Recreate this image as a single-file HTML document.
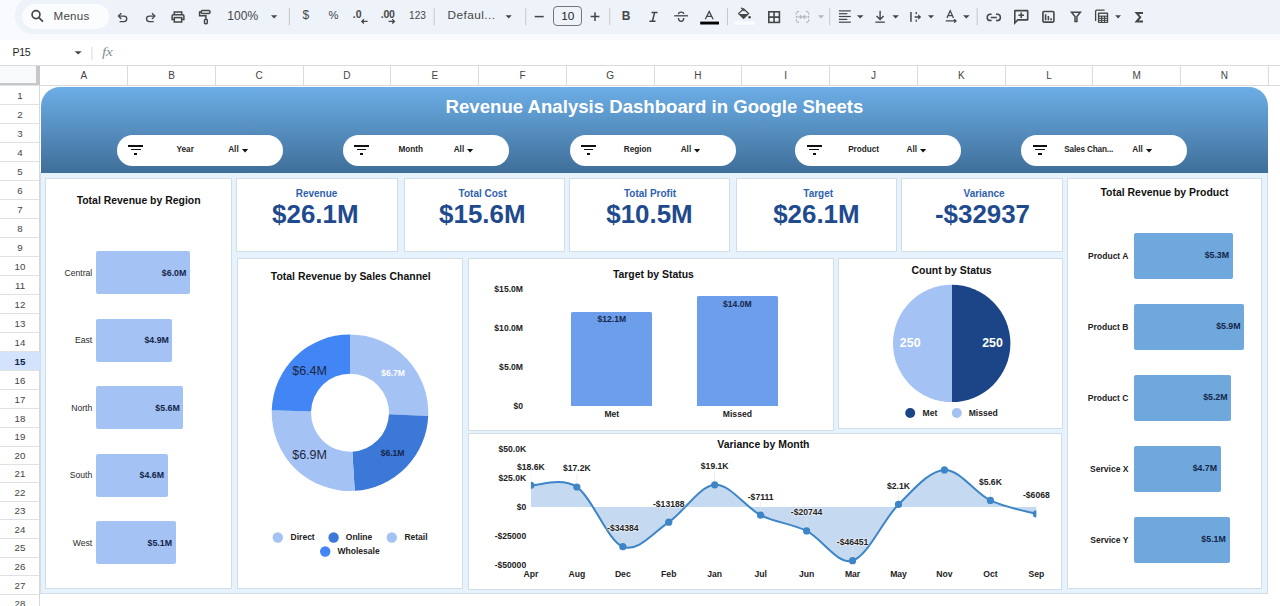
<!DOCTYPE html>
<html><head><meta charset="utf-8"><style>
*{box-sizing:border-box;margin:0;padding:0}
html,body{width:1280px;height:606px;overflow:hidden;background:#f9fbfd;font-family:"Liberation Sans",sans-serif;position:relative}
.a{position:absolute}
.t{position:absolute;white-space:nowrap;line-height:1}
.c{transform:translateX(-50%)}
.r{transform:translateX(-100%)}
svg{position:absolute;overflow:visible}
.card{position:absolute;background:#fff;border:1.6px solid #d2e2f2}
.ttl{position:absolute;white-space:nowrap;line-height:1;font-weight:700;font-size:10.35px;color:#111;transform:translateX(-50%)}
.pill{position:absolute;top:135px;width:166px;height:31px;border-radius:16px;background:#fff}
.pl{position:absolute;font-size:8.3px;font-weight:700;color:#1f1f1f;white-space:nowrap;line-height:1}
.kl{position:absolute;font-size:10.2px;font-weight:700;color:#3b6ec6;white-space:nowrap;line-height:1;transform:translateX(-50%)}
.kv{position:absolute;font-size:25.6px;font-weight:700;color:#1f4a8a;white-space:nowrap;line-height:1;transform:translateX(-50%)}
.rh{position:absolute;left:0;width:39.5px;text-align:center;font-size:9.8px;color:#444;line-height:1}
.ch{position:absolute;top:71.5px;font-size:9.8px;color:#444;line-height:1;transform:translateX(-50%)}
</style></head><body>
<div class="a" style="left:0px;top:0px;width:1280px;height:40px;background:#f8fafd"></div>
<div class="a" style="left:15px;top:-3px;width:1265px;height:36.5px;background:#eef2f9;border-radius:18px 0 0 18px"></div>
<div class="a" style="left:21.5px;top:4px;width:87px;height:24.5px;background:#fbfcfe;border-radius:12.5px"></div>
<div class="t" style="left:53.5px;top:10.08px;font-size:11.6px;font-weight:400;color:#444746;letter-spacing:0.25px;">Menus</div>
<div class="t" style="left:227.3px;top:10.44px;font-size:12px;font-weight:400;color:#444746;letter-spacing:0.1px;">100%</div>
<div class="t" style="left:447.5px;top:9.81px;font-size:11.8px;font-weight:400;color:#444746;letter-spacing:0.45px;">Defaul...</div>
<div class="t" style="left:567.7px;top:11.01px;font-size:11.8px;font-weight:400;color:#1f1f1f;transform:translateX(-50%);">10</div>
<div class="t" style="left:409px;top:10.75px;font-size:10.1px;font-weight:400;color:#444746;letter-spacing:0.05px;">123</div>
<div class="t" style="left:302.4px;top:8.84px;font-size:12px;font-weight:400;color:#444746;">$</div>
<div class="t" style="left:328.5px;top:9.82px;font-size:11.2px;font-weight:400;color:#444746;">%</div>
<div class="t" style="left:352.8px;top:8.81px;font-size:10.5px;font-weight:700;color:#444746;">.0</div>
<div class="t" style="left:380.8px;top:8.81px;font-size:10.5px;font-weight:700;color:#444746;letter-spacing:-0.3px;">.00</div>
<div class="a" style="left:553px;top:6.2px;width:29px;height:20px;border:1px solid #747775;border-radius:4px"></div>
<svg width="1280" height="34" style="left:0;top:0" viewBox="0 0 1280 34"><circle cx="36" cy="14.6" r="3.95" stroke="#444746" fill="none" stroke-linecap="butt" stroke-linejoin="miter" stroke-width="1.7"/><path d="M38.9,17.6 L42.9,21.6" stroke="#444746" fill="none" stroke-linecap="butt" stroke-linejoin="miter" stroke-width="1.7"/><path d="M121.3,13.2 L118.5,16.1 L121.3,19" stroke="#444746" fill="none" stroke-linecap="butt" stroke-linejoin="miter" stroke-width="1.35"/><path d="M118.8,16.1 H124 A2.75,2.75 0 0 1 124,21.6 H119.6" stroke="#444746" fill="none" stroke-linecap="butt" stroke-linejoin="miter" stroke-width="1.35"/><path d="M152,13.2 L154.8,16.1 L152,19" stroke="#444746" fill="none" stroke-linecap="butt" stroke-linejoin="miter" stroke-width="1.35"/><path d="M154.5,16.1 H149.3 A2.75,2.75 0 0 0 149.3,21.6 H153.7" stroke="#444746" fill="none" stroke-linecap="butt" stroke-linejoin="miter" stroke-width="1.35"/><path d="M174.3,14.6 V11.9 H181.7 V14.6" stroke="#444746" fill="none" stroke-linecap="butt" stroke-linejoin="miter" stroke-width="1.5"/><path d="M174.3,19.6 H172.1 V16.1 Q172.1,14.8 173.4,14.8 H182.6 Q183.9,14.8 183.9,16.1 V19.6 H181.7" stroke="#444746" fill="none" stroke-linecap="butt" stroke-linejoin="miter" stroke-width="1.5"/><rect x="174.3" y="17.6" width="7.4" height="4.4" stroke="#444746" fill="none" stroke-linecap="butt" stroke-linejoin="miter" stroke-width="1.5"/><rect x="201.2" y="10.5" width="8.8" height="3" rx="1.2" stroke="#444746" fill="none" stroke-linecap="butt" stroke-linejoin="miter" stroke-width="1.5"/><path d="M201,12 H199.6 V15.8 H205.9 V18.8" stroke="#444746" fill="none" stroke-linecap="butt" stroke-linejoin="miter" stroke-width="1.5"/><rect x="204.5" y="19.2" width="2.8" height="4.6" rx="1" stroke="#444746" fill="none" stroke-linecap="butt" stroke-linejoin="miter" stroke-width="1.5"/><rect x="288.9" y="8.3" width="1" height="17" fill="#c7c7c7"/><rect x="433.7" y="8.3" width="1" height="17" fill="#c7c7c7"/><rect x="525.2" y="8.3" width="1" height="17" fill="#c7c7c7"/><rect x="609.2" y="8.3" width="1" height="17" fill="#c7c7c7"/><rect x="727.0" y="8.3" width="1" height="17" fill="#c7c7c7"/><rect x="829.2" y="8.3" width="1" height="17" fill="#c7c7c7"/><rect x="976.7" y="8.3" width="1" height="17" fill="#c7c7c7"/><path d="M271,15.2 L277.2,15.2 L274.1,18.4 Z" fill="#444746"/><path d="M505.6,15.2 L511.8,15.2 L508.70000000000005,18.4 Z" fill="#444746"/><path d="M856.9,15.2 L863.5,15.2 L860.2,18.4 Z" fill="#444746"/><path d="M892.4,15.2 L898.9,15.2 L895.65,18.4 Z" fill="#444746"/><path d="M928,15.2 L934,15.2 L931.0,18.4 Z" fill="#444746"/><path d="M963,15.2 L969.7,15.2 L966.35,18.4 Z" fill="#444746"/><path d="M1115.2,15.2 L1121,15.2 L1118.1,18.4 Z" fill="#444746"/><path d="M818,15.2 L824,15.2 L821.0,18.4 Z" fill="#b4b6b8"/><path d="M367.6,21.4 H361.8 M363.9,19.3 L361.8,21.4 L363.9,23.5" stroke="#444746" fill="none" stroke-linecap="butt" stroke-linejoin="miter" stroke-width="1.3"/><path d="M388.6,21.4 H394.4 M392.3,19.3 L394.4,21.4 L392.3,23.5" stroke="#444746" fill="none" stroke-linecap="butt" stroke-linejoin="miter" stroke-width="1.3"/><path d="M534.7,16.6 H543.7" stroke="#444746" fill="none" stroke-linecap="butt" stroke-linejoin="miter" stroke-width="1.5"/><path d="M590.6,16.6 H599.4 M595,12.2 V21" stroke="#444746" fill="none" stroke-linecap="butt" stroke-linejoin="miter" stroke-width="1.5"/></svg><div class="t" style="left:621.8px;top:10.24px;font-size:12px;font-weight:700;color:#444746;">B</div>
<svg width="1280" height="34" style="left:0;top:0" viewBox="0 0 1280 34"><path d="M651.5,12.6 H657.6 M649.4,21.2 H655.5 M654.6,12.6 L652.4,21.2" stroke="#444746" fill="none" stroke-linecap="butt" stroke-linejoin="miter" stroke-width="1.5"/><path d="M674.2,15.8 H688" stroke="#444746" fill="none" stroke-linecap="butt" stroke-linejoin="miter" stroke-width="1.3"/><path d="M678.4,14.3 Q678.6,12.1 681.1,12.1 Q683.6,12.1 683.8,14" stroke="#444746" fill="none" stroke-linecap="butt" stroke-linejoin="miter" stroke-width="1.3"/><path d="M678.4,18 Q678.6,21.3 681.1,21.3 Q683.6,21.3 683.8,18" stroke="#444746" fill="none" stroke-linecap="butt" stroke-linejoin="miter" stroke-width="1.3"/><path d="M705.3,19.2 L709.2,11.4 L713.1,19.2 M706.8,16.4 H711.6" stroke="#444746" fill="none" stroke-linecap="butt" stroke-linejoin="miter" stroke-width="1.3"/><rect x="700.2" y="21.6" width="18.8" height="2.9" fill="#000"/><path d="M741.2,7.8 L744.5,11.1" stroke="#444746" fill="none" stroke-linecap="butt" stroke-linejoin="miter" stroke-width="1.3"/><path d="M738.6,13.6 L743.6,8.8 L748.6,13.6 L743.6,18.4 Z" stroke="#444746" fill="none" stroke-linecap="butt" stroke-linejoin="miter" stroke-width="1.3"/><path d="M739,13.9 H748.2 L743.6,18.3 Z" fill="#444746"/><circle cx="749.6" cy="17.3" r="1.3" fill="#444746"/><rect x="734.6" y="21.4" width="20.4" height="3.2" fill="#fbfcfd"/><rect x="768.8" y="11.8" width="10.6" height="10.6" stroke="#444746" fill="none" stroke-linecap="butt" stroke-linejoin="miter" stroke-width="1.6"/><path d="M774.1,11.8 V22.4 M768.8,17.1 H779.4" stroke="#444746" fill="none" stroke-linecap="butt" stroke-linejoin="miter" stroke-width="1.6"/><path d="M799,11.6 H796.4 V22.2 H799 M806,11.6 H808.6 V22.2 H806" stroke="#b4b6b8" stroke-width="1.2" fill="none" stroke-dasharray="2.2 1.2"/><path d="M797.5,16.9 H801.6 M800,15.2 L801.8,16.9 L800,18.6 M807.5,16.9 H803.4 M805,15.2 L803.2,16.9 L805,18.6" stroke="#b4b6b8" stroke-width="1.2" fill="none"/><rect x="838.9" y="10.3" width="11.899999999999977" height="1.2" fill="#444746"/><rect x="838.9" y="13.1" width="8.399999999999977" height="1.2" fill="#444746"/><rect x="838.9" y="15.9" width="11.899999999999977" height="1.2" fill="#444746"/><rect x="838.9" y="18.799999999999997" width="8.399999999999977" height="1.2" fill="#444746"/><rect x="838.9" y="21.599999999999998" width="11.899999999999977" height="1.2" fill="#444746"/><path d="M880.1,10.8 V19.4 M876.6,16 L880.1,19.5 L883.6,16" stroke="#444746" fill="none" stroke-linecap="butt" stroke-linejoin="miter" stroke-width="1.4"/><rect x="875.4" y="21.5" width="9.4" height="1.3" fill="#444746"/><rect x="910.2" y="12" width="1.5" height="9.8" fill="#444746"/><rect x="915.6" y="12" width="1.3" height="2.2" fill="#444746"/><rect x="915.6" y="19.6" width="1.3" height="2.2" fill="#444746"/><path d="M914.6,17 H918.8" stroke="#444746" fill="none" stroke-linecap="butt" stroke-linejoin="miter" stroke-width="1.5"/><path d="M918.2,14.2 L921.2,17 L918.2,19.8 Z" fill="#444746"/><path d="M946.9,18 L950.2,10.8 L953.5,18 M948.1,15.6 H952.3" stroke="#444746" fill="none" stroke-linecap="butt" stroke-linejoin="miter" stroke-width="1.25"/><path d="M945.8,20.9 H956 M954.2,19.2 L956,20.9 L954.2,22.6" stroke="#444746" fill="none" stroke-linecap="butt" stroke-linejoin="miter" stroke-width="1.3"/><path d="M991.6,14.2 H990.4 A3.2,3.2 0 0 0 990.4,20.6 H991.6 M996,14.2 H997.2 A3.2,3.2 0 0 1 997.2,20.6 H996 M990.8,17.4 H996.8" stroke="#444746" fill="none" stroke-linecap="butt" stroke-linejoin="miter" stroke-width="1.5"/><path d="M1014.8,23 V11.1 Q1014.8,10.6 1015.3,10.6 H1027.2 Q1027.7,10.6 1027.7,11.1 V19.4 Q1027.7,19.9 1027.2,19.9 H1017.8 Z" stroke="#444746" fill="none" stroke-linecap="butt" stroke-linejoin="miter" stroke-width="1.6"/><path d="M1021.2,12.4 V18 M1018.4,15.2 H1024" stroke="#444746" fill="none" stroke-linecap="butt" stroke-linejoin="miter" stroke-width="1.6"/><rect x="1042.9" y="11.5" width="11" height="10.6" rx="1" stroke="#444746" fill="none" stroke-linecap="butt" stroke-linejoin="miter" stroke-width="1.6"/><path d="M1045.6,14.2 V20.2 M1048.4,15.9 V20.2 M1051.1,18.2 V20.2" stroke="#444746" fill="none" stroke-linecap="butt" stroke-linejoin="miter" stroke-width="1.6"/><path d="M1071.5,12.2 H1080.4 L1076.9,16.6 V21.6 H1075 V16.6 Z" stroke="#444746" fill="none" stroke-linecap="butt" stroke-linejoin="miter" stroke-width="1.5"/><path d="M1095.6,21 V11.2 Q1095.6,10.1 1096.7,10.1 H1104.6" stroke="#444746" fill="none" stroke-linecap="butt" stroke-linejoin="miter" stroke-width="1.3"/><rect x="1097.9" y="12.4" width="10.3" height="10.6" rx="1" fill="#444746"/><rect x="1099.3" y="16.75" width="1.6" height="1.1" fill="#eef2f9"/><rect x="1099.3" y="18.849999999999998" width="1.6" height="1.1" fill="#eef2f9"/><rect x="1099.3" y="20.849999999999998" width="1.6" height="1.1" fill="#eef2f9"/><rect x="1102.25" y="16.75" width="1.6" height="1.1" fill="#eef2f9"/><rect x="1102.25" y="18.849999999999998" width="1.6" height="1.1" fill="#eef2f9"/><rect x="1102.25" y="20.849999999999998" width="1.6" height="1.1" fill="#eef2f9"/><rect x="1105.2" y="16.75" width="1.6" height="1.1" fill="#eef2f9"/><rect x="1105.2" y="18.849999999999998" width="1.6" height="1.1" fill="#eef2f9"/><rect x="1105.2" y="20.849999999999998" width="1.6" height="1.1" fill="#eef2f9"/><rect x="1099.2" y="13.9" width="7.7" height="1.7" fill="#eef2f9"/><path d="M1143,12.9 H1136.6 L1140.2,17.2 L1136.6,21.5 H1143" stroke="#444746" fill="none" stroke-linecap="butt" stroke-linejoin="miter" stroke-width="2"/></svg><div class="a" style="left:0px;top:40px;width:1280px;height:24.5px;background:#fff"></div>
<div class="t" style="left:12.6px;top:47.03px;font-size:10.6px;font-weight:400;color:#1f1f1f;letter-spacing:-0.35px;">P15</div>
<svg width="130" height="66" style="left:0;top:0"><path d="M74.6,51.2 L81.8,51.2 L78.19999999999999,54.6 Z" fill="#444746"/><rect x="91.4" y="46.7" width="1" height="13.7" fill="#d7d9dc"/></svg><div class="t" style="left:102px;top:46.36px;font-size:12.8px;font-weight:400;color:#8a8f94;font-family:'Liberation Serif';font-style:italic;letter-spacing:-0.2px;transform:scaleX(1.2);transform-origin:0 0;">fx</div>
<div class="a" style="left:0px;top:65px;width:1280px;height:20.5px;background:#fff"></div>
<div class="a" style="left:0px;top:64.6px;width:1280px;height:0.9px;background:#d9dbde"></div>
<div class="a" style="left:0px;top:85.5px;width:40px;height:520.5px;background:#fff"></div>
<div class="a" style="left:0px;top:65.5px;width:37px;height:17.5px;background:#f8f9fa"></div>
<div class="a" style="left:0px;top:82.9px;width:40px;height:2.6px;background:#c5c7ca"></div>
<div class="a" style="left:36.4px;top:65.5px;width:3.4px;height:20px;background:#c5c7ca"></div>
<div class="a" style="left:40px;top:85.5px;width:1240px;height:520.5px;background:#fff"></div>
<div class="a" style="left:40px;top:85px;width:1240px;height:0.8px;background:#d9dbde"></div>
<div class="a" style="left:127.15px;top:65.5px;width:0.9px;height:20px;background:#d9dbde"></div>
<div class="t" style="left:83.72px;top:71.42px;font-size:10px;font-weight:400;color:#444;transform:translateX(-50%);">A</div>
<div class="a" style="left:214.9px;top:65.5px;width:0.9px;height:20px;background:#d9dbde"></div>
<div class="t" style="left:171.47px;top:71.42px;font-size:10px;font-weight:400;color:#444;transform:translateX(-50%);">B</div>
<div class="a" style="left:302.65px;top:65.5px;width:0.9px;height:20px;background:#d9dbde"></div>
<div class="t" style="left:259.23px;top:71.42px;font-size:10px;font-weight:400;color:#444;transform:translateX(-50%);">C</div>
<div class="a" style="left:390.4px;top:65.5px;width:0.9px;height:20px;background:#d9dbde"></div>
<div class="t" style="left:346.98px;top:71.42px;font-size:10px;font-weight:400;color:#444;transform:translateX(-50%);">D</div>
<div class="a" style="left:478.15px;top:65.5px;width:0.9px;height:20px;background:#d9dbde"></div>
<div class="t" style="left:434.73px;top:71.42px;font-size:10px;font-weight:400;color:#444;transform:translateX(-50%);">E</div>
<div class="a" style="left:565.9px;top:65.5px;width:0.9px;height:20px;background:#d9dbde"></div>
<div class="t" style="left:522.48px;top:71.42px;font-size:10px;font-weight:400;color:#444;transform:translateX(-50%);">F</div>
<div class="a" style="left:653.65px;top:65.5px;width:0.9px;height:20px;background:#d9dbde"></div>
<div class="t" style="left:610.23px;top:71.42px;font-size:10px;font-weight:400;color:#444;transform:translateX(-50%);">G</div>
<div class="a" style="left:741.4px;top:65.5px;width:0.9px;height:20px;background:#d9dbde"></div>
<div class="t" style="left:697.98px;top:71.42px;font-size:10px;font-weight:400;color:#444;transform:translateX(-50%);">H</div>
<div class="a" style="left:829.15px;top:65.5px;width:0.9px;height:20px;background:#d9dbde"></div>
<div class="t" style="left:785.73px;top:71.42px;font-size:10px;font-weight:400;color:#444;transform:translateX(-50%);">I</div>
<div class="a" style="left:916.9px;top:65.5px;width:0.9px;height:20px;background:#d9dbde"></div>
<div class="t" style="left:873.48px;top:71.42px;font-size:10px;font-weight:400;color:#444;transform:translateX(-50%);">J</div>
<div class="a" style="left:1004.65px;top:65.5px;width:0.9px;height:20px;background:#d9dbde"></div>
<div class="t" style="left:961.23px;top:71.42px;font-size:10px;font-weight:400;color:#444;transform:translateX(-50%);">K</div>
<div class="a" style="left:1092.4px;top:65.5px;width:0.9px;height:20px;background:#d9dbde"></div>
<div class="t" style="left:1048.97px;top:71.42px;font-size:10px;font-weight:400;color:#444;transform:translateX(-50%);">L</div>
<div class="a" style="left:1180.15px;top:65.5px;width:0.9px;height:20px;background:#d9dbde"></div>
<div class="t" style="left:1136.72px;top:71.42px;font-size:10px;font-weight:400;color:#444;transform:translateX(-50%);">M</div>
<div class="a" style="left:1267.9px;top:65.5px;width:0.9px;height:20px;background:#d9dbde"></div>
<div class="t" style="left:1224.47px;top:71.42px;font-size:10px;font-weight:400;color:#444;transform:translateX(-50%);">N</div>
<div class="a" style="left:1355.65px;top:65.5px;width:0.9px;height:20px;background:#d9dbde"></div>
<div class="t" style="left:1312.22px;top:71.42px;font-size:10px;font-weight:400;color:#444;transform:translateX(-50%);">O</div>
<div class="a" style="left:0px;top:85.1px;width:39.5px;height:0.8px;background:#dfe1e3"></div>
<div class="a" style="left:0px;top:104px;width:39.5px;height:0.8px;background:#dfe1e3"></div>
<div class="a" style="left:0px;top:122.8px;width:39.5px;height:0.8px;background:#dfe1e3"></div>
<div class="a" style="left:0px;top:142px;width:39.5px;height:0.8px;background:#dfe1e3"></div>
<div class="a" style="left:0px;top:160.8px;width:39.5px;height:0.8px;background:#dfe1e3"></div>
<div class="a" style="left:0px;top:179.9px;width:39.5px;height:0.8px;background:#dfe1e3"></div>
<div class="a" style="left:0px;top:198.9px;width:39.5px;height:0.8px;background:#dfe1e3"></div>
<div class="a" style="left:0px;top:218.1px;width:39.5px;height:0.8px;background:#dfe1e3"></div>
<div class="a" style="left:0px;top:236.9px;width:39.5px;height:0.8px;background:#dfe1e3"></div>
<div class="a" style="left:0px;top:256.1px;width:39.5px;height:0.8px;background:#dfe1e3"></div>
<div class="a" style="left:0px;top:275.1px;width:39.5px;height:0.8px;background:#dfe1e3"></div>
<div class="a" style="left:0px;top:294.2px;width:39.5px;height:0.8px;background:#dfe1e3"></div>
<div class="a" style="left:0px;top:313.1px;width:39.5px;height:0.8px;background:#dfe1e3"></div>
<div class="a" style="left:0px;top:331.9px;width:39.5px;height:0.8px;background:#dfe1e3"></div>
<div class="a" style="left:0px;top:351px;width:39.5px;height:0.8px;background:#dfe1e3"></div>
<div class="a" style="left:0px;top:370.1px;width:39.5px;height:0.8px;background:#dfe1e3"></div>
<div class="a" style="left:0px;top:389.1px;width:39.5px;height:0.8px;background:#dfe1e3"></div>
<div class="a" style="left:0px;top:408.3px;width:39.5px;height:0.8px;background:#dfe1e3"></div>
<div class="a" style="left:0px;top:427.1px;width:39.5px;height:0.8px;background:#dfe1e3"></div>
<div class="a" style="left:0px;top:445.5px;width:39.5px;height:0.8px;background:#dfe1e3"></div>
<div class="a" style="left:0px;top:463.8px;width:39.5px;height:0.8px;background:#dfe1e3"></div>
<div class="a" style="left:0px;top:482.2px;width:39.5px;height:0.8px;background:#dfe1e3"></div>
<div class="a" style="left:0px;top:500.5px;width:39.5px;height:0.8px;background:#dfe1e3"></div>
<div class="a" style="left:0px;top:519.3px;width:39.5px;height:0.8px;background:#dfe1e3"></div>
<div class="a" style="left:0px;top:538.1px;width:39.5px;height:0.8px;background:#dfe1e3"></div>
<div class="a" style="left:0px;top:556.5px;width:39.5px;height:0.8px;background:#dfe1e3"></div>
<div class="a" style="left:0px;top:575.1px;width:39.5px;height:0.8px;background:#dfe1e3"></div>
<div class="a" style="left:0px;top:593.9px;width:39.5px;height:0.8px;background:#dfe1e3"></div>
<div class="a" style="left:0px;top:612.7px;width:39.5px;height:0.8px;background:#dfe1e3"></div>
<div class="a" style="left:39.1px;top:85.5px;width:1px;height:520.5px;background:#d5d7da"></div>
<div class="a" style="left:0px;top:351.9px;width:39.5px;height:18.2px;background:#d3e3fd"></div>
<div class="t" style="left:20px;top:90.72px;font-size:9.7px;font-weight:400;color:#444;transform:translateX(-50%);">1</div>
<div class="t" style="left:20px;top:109.57px;font-size:9.7px;font-weight:400;color:#444;transform:translateX(-50%);">2</div>
<div class="t" style="left:20px;top:128.57px;font-size:9.7px;font-weight:400;color:#444;transform:translateX(-50%);">3</div>
<div class="t" style="left:20px;top:147.57px;font-size:9.7px;font-weight:400;color:#444;transform:translateX(-50%);">4</div>
<div class="t" style="left:20px;top:166.52px;font-size:9.7px;font-weight:400;color:#444;transform:translateX(-50%);">5</div>
<div class="t" style="left:20px;top:185.57px;font-size:9.7px;font-weight:400;color:#444;transform:translateX(-50%);">6</div>
<div class="t" style="left:20px;top:204.67px;font-size:9.7px;font-weight:400;color:#444;transform:translateX(-50%);">7</div>
<div class="t" style="left:20px;top:223.67px;font-size:9.7px;font-weight:400;color:#444;transform:translateX(-50%);">8</div>
<div class="t" style="left:20px;top:242.67px;font-size:9.7px;font-weight:400;color:#444;transform:translateX(-50%);">9</div>
<div class="t" style="left:20px;top:261.77px;font-size:9.7px;font-weight:400;color:#444;transform:translateX(-50%);">10</div>
<div class="t" style="left:20px;top:280.82px;font-size:9.7px;font-weight:400;color:#444;transform:translateX(-50%);">11</div>
<div class="t" style="left:20px;top:299.82px;font-size:9.7px;font-weight:400;color:#444;transform:translateX(-50%);">12</div>
<div class="t" style="left:20px;top:318.67px;font-size:9.7px;font-weight:400;color:#444;transform:translateX(-50%);">13</div>
<div class="t" style="left:20px;top:337.62px;font-size:9.7px;font-weight:400;color:#444;transform:translateX(-50%);">14</div>
<div class="t" style="left:20px;top:356.72px;font-size:9.7px;font-weight:700;color:#0b1f4d;transform:translateX(-50%);">15</div>
<div class="t" style="left:20px;top:375.77px;font-size:9.7px;font-weight:400;color:#444;transform:translateX(-50%);">16</div>
<div class="t" style="left:20px;top:394.87px;font-size:9.7px;font-weight:400;color:#444;transform:translateX(-50%);">17</div>
<div class="t" style="left:20px;top:413.87px;font-size:9.7px;font-weight:400;color:#444;transform:translateX(-50%);">18</div>
<div class="t" style="left:20px;top:432.47px;font-size:9.7px;font-weight:400;color:#444;transform:translateX(-50%);">19</div>
<div class="t" style="left:20px;top:450.82px;font-size:9.7px;font-weight:400;color:#444;transform:translateX(-50%);">20</div>
<div class="t" style="left:20px;top:469.17px;font-size:9.7px;font-weight:400;color:#444;transform:translateX(-50%);">21</div>
<div class="t" style="left:20px;top:487.52px;font-size:9.7px;font-weight:400;color:#444;transform:translateX(-50%);">22</div>
<div class="t" style="left:20px;top:506.07px;font-size:9.7px;font-weight:400;color:#444;transform:translateX(-50%);">23</div>
<div class="t" style="left:20px;top:524.87px;font-size:9.7px;font-weight:400;color:#444;transform:translateX(-50%);">24</div>
<div class="t" style="left:20px;top:543.47px;font-size:9.7px;font-weight:400;color:#444;transform:translateX(-50%);">25</div>
<div class="t" style="left:20px;top:561.97px;font-size:9.7px;font-weight:400;color:#444;transform:translateX(-50%);">26</div>
<div class="t" style="left:20px;top:580.67px;font-size:9.7px;font-weight:400;color:#444;transform:translateX(-50%);">27</div>
<div class="t" style="left:20px;top:599.47px;font-size:9.7px;font-weight:400;color:#444;transform:translateX(-50%);">28</div>
<div class="a" style="left:40.3px;top:172px;width:1228px;height:422.2px;background:#e6f2fc;border:1px solid #d3dee8;border-top:0"></div>
<div class="a" style="left:41px;top:87px;width:1227px;height:85.5px;border-radius:19px 19px 0 0;background:linear-gradient(#6caee6,#3f6e99)"></div>
<div class="t" style="left:654.5px;top:97.86px;font-size:18.6px;font-weight:700;color:#fff;transform:translateX(-50%);">Revenue Analysis Dashboard in Google Sheets</div>
<div class="a" style="left:117px;top:134.9px;width:166px;height:31.2px;background:#fff;border-radius:15.6px"></div>
<div class="a" style="left:128.4px;top:144.9px;width:14.9px;height:1.7px;background:#111"></div>
<div class="a" style="left:131px;top:148.9px;width:9.7px;height:1.6px;background:#111"></div>
<div class="a" style="left:134.1px;top:152.9px;width:3.4px;height:1.8px;background:#111"></div>
<div class="t" style="left:185.2px;top:146.26px;font-size:8.2px;font-weight:700;color:#1f1f1f;transform:translateX(-50%);">Year</div>
<div class="t" style="left:228.2px;top:146.26px;font-size:8.2px;font-weight:700;color:#1f1f1f;">All</div>
<svg width="10" height="10" style="left:241.9px;top:149.2px"><path d="M0,0 H6.2 L3.1,3.4 Z" fill="#111"/></svg>
<div class="a" style="left:342.5px;top:134.9px;width:166px;height:31.2px;background:#fff;border-radius:15.6px"></div>
<div class="a" style="left:353.9px;top:144.9px;width:14.9px;height:1.7px;background:#111"></div>
<div class="a" style="left:356.5px;top:148.9px;width:9.7px;height:1.6px;background:#111"></div>
<div class="a" style="left:359.6px;top:152.9px;width:3.4px;height:1.8px;background:#111"></div>
<div class="t" style="left:410.7px;top:146.26px;font-size:8.2px;font-weight:700;color:#1f1f1f;transform:translateX(-50%);">Month</div>
<div class="t" style="left:453.7px;top:146.26px;font-size:8.2px;font-weight:700;color:#1f1f1f;">All</div>
<svg width="10" height="10" style="left:467.4px;top:149.2px"><path d="M0,0 H6.2 L3.1,3.4 Z" fill="#111"/></svg>
<div class="a" style="left:569.5px;top:134.9px;width:166px;height:31.2px;background:#fff;border-radius:15.6px"></div>
<div class="a" style="left:580.9px;top:144.9px;width:14.9px;height:1.7px;background:#111"></div>
<div class="a" style="left:583.5px;top:148.9px;width:9.7px;height:1.6px;background:#111"></div>
<div class="a" style="left:586.6px;top:152.9px;width:3.4px;height:1.8px;background:#111"></div>
<div class="t" style="left:637.7px;top:146.26px;font-size:8.2px;font-weight:700;color:#1f1f1f;transform:translateX(-50%);">Region</div>
<div class="t" style="left:680.7px;top:146.26px;font-size:8.2px;font-weight:700;color:#1f1f1f;">All</div>
<svg width="10" height="10" style="left:694.4px;top:149.2px"><path d="M0,0 H6.2 L3.1,3.4 Z" fill="#111"/></svg>
<div class="a" style="left:795.4px;top:134.9px;width:166px;height:31.2px;background:#fff;border-radius:15.6px"></div>
<div class="a" style="left:806.8px;top:144.9px;width:14.9px;height:1.7px;background:#111"></div>
<div class="a" style="left:809.4px;top:148.9px;width:9.7px;height:1.6px;background:#111"></div>
<div class="a" style="left:812.5px;top:152.9px;width:3.4px;height:1.8px;background:#111"></div>
<div class="t" style="left:863.6px;top:146.26px;font-size:8.2px;font-weight:700;color:#1f1f1f;transform:translateX(-50%);">Product</div>
<div class="t" style="left:906.6px;top:146.26px;font-size:8.2px;font-weight:700;color:#1f1f1f;">All</div>
<svg width="10" height="10" style="left:920.3px;top:149.2px"><path d="M0,0 H6.2 L3.1,3.4 Z" fill="#111"/></svg>
<div class="a" style="left:1021.1px;top:134.9px;width:166px;height:31.2px;background:#fff;border-radius:15.6px"></div>
<div class="a" style="left:1032.5px;top:144.9px;width:14.9px;height:1.7px;background:#111"></div>
<div class="a" style="left:1035.1px;top:148.9px;width:9.7px;height:1.6px;background:#111"></div>
<div class="a" style="left:1038.2px;top:152.9px;width:3.4px;height:1.8px;background:#111"></div>
<div class="t" style="left:1088.7px;top:146.26px;font-size:8.2px;font-weight:700;color:#1f1f1f;transform:translateX(-50%);letter-spacing:-0.15px;">Sales Chan...</div>
<div class="t" style="left:1132.3px;top:146.26px;font-size:8.2px;font-weight:700;color:#1f1f1f;">All</div>
<svg width="10" height="10" style="left:1146px;top:149.2px"><path d="M0,0 H6.2 L3.1,3.4 Z" fill="#111"/></svg>
<div class="a" style="left:236px;top:178px;width:161.7px;height:74px;background:#fff;border:1px solid #d2dde8"></div>
<div class="t" style="left:316.5px;top:189.34px;font-size:10px;font-weight:700;color:#2f5fb0;transform:translateX(-50%);">Revenue</div>
<div class="t" style="left:315.3px;top:202.08px;font-size:25.9px;font-weight:700;color:#1f4b8e;transform:translateX(-50%);">$26.1M</div>
<div class="a" style="left:403.7px;top:178px;width:161.3px;height:74px;background:#fff;border:1px solid #d2dde8"></div>
<div class="t" style="left:482.7px;top:189.34px;font-size:10px;font-weight:700;color:#2f5fb0;transform:translateX(-50%);">Total Cost</div>
<div class="t" style="left:482.3px;top:202.08px;font-size:25.9px;font-weight:700;color:#1f4b8e;transform:translateX(-50%);">$15.6M</div>
<div class="a" style="left:569.1px;top:178px;width:161.3px;height:74px;background:#fff;border:1px solid #d2dde8"></div>
<div class="t" style="left:650px;top:189.34px;font-size:10px;font-weight:700;color:#2f5fb0;transform:translateX(-50%);">Total Profit</div>
<div class="t" style="left:649.5px;top:202.08px;font-size:25.9px;font-weight:700;color:#1f4b8e;transform:translateX(-50%);">$10.5M</div>
<div class="a" style="left:736px;top:178px;width:160.5px;height:74px;background:#fff;border:1px solid #d2dde8"></div>
<div class="t" style="left:818.2px;top:189.34px;font-size:10px;font-weight:700;color:#2f5fb0;transform:translateX(-50%);">Target</div>
<div class="t" style="left:816.4px;top:202.08px;font-size:25.9px;font-weight:700;color:#1f4b8e;transform:translateX(-50%);">$26.1M</div>
<div class="a" style="left:901.4px;top:178px;width:161.3px;height:74px;background:#fff;border:1px solid #d2dde8"></div>
<div class="t" style="left:984.1px;top:189.34px;font-size:10px;font-weight:700;color:#2f5fb0;transform:translateX(-50%);">Variance</div>
<div class="t" style="left:982.5px;top:202.08px;font-size:25.9px;font-weight:700;color:#1f4b8e;transform:translateX(-50%);">-$32937</div>
<div class="a" style="left:45px;top:178px;width:187.4px;height:411.2px;background:#fff;border:1px solid #d2dde8"></div>
<div class="t" style="left:138.6px;top:196.1px;font-size:10.45px;font-weight:700;color:#111;transform:translateX(-50%);">Total Revenue by Region</div>
<div class="a" style="left:96.2px;top:251.1px;width:93.7px;height:43px;background:#a4c2f4;border-radius:2px"></div>
<div class="t" style="left:92.2px;top:268.9px;font-size:8.6px;font-weight:400;color:#2a2a2a;transform:translateX(-100%);">Central</div>
<div class="t" style="left:186.3px;top:268.81px;font-size:8.8px;font-weight:700;color:#14264a;transform:translateX(-100%);">$6.0M</div>
<div class="a" style="left:96.2px;top:318.62px;width:76.3px;height:43px;background:#a4c2f4;border-radius:2px"></div>
<div class="t" style="left:92.2px;top:336.42px;font-size:8.6px;font-weight:400;color:#2a2a2a;transform:translateX(-100%);">East</div>
<div class="t" style="left:168.9px;top:336.33px;font-size:8.8px;font-weight:700;color:#14264a;transform:translateX(-100%);">$4.9M</div>
<div class="a" style="left:96.2px;top:386.14px;width:87.2px;height:43px;background:#a4c2f4;border-radius:2px"></div>
<div class="t" style="left:92.2px;top:403.94px;font-size:8.6px;font-weight:400;color:#2a2a2a;transform:translateX(-100%);">North</div>
<div class="t" style="left:179.8px;top:403.85px;font-size:8.8px;font-weight:700;color:#14264a;transform:translateX(-100%);">$5.6M</div>
<div class="a" style="left:96.2px;top:453.66px;width:71.4px;height:43px;background:#a4c2f4;border-radius:2px"></div>
<div class="t" style="left:92.2px;top:471.46px;font-size:8.6px;font-weight:400;color:#2a2a2a;transform:translateX(-100%);">South</div>
<div class="t" style="left:164px;top:471.37px;font-size:8.8px;font-weight:700;color:#14264a;transform:translateX(-100%);">$4.6M</div>
<div class="a" style="left:96.2px;top:521.18px;width:79.4px;height:43px;background:#a4c2f4;border-radius:2px"></div>
<div class="t" style="left:92.2px;top:538.98px;font-size:8.6px;font-weight:400;color:#2a2a2a;transform:translateX(-100%);">West</div>
<div class="t" style="left:172px;top:538.89px;font-size:8.8px;font-weight:700;color:#14264a;transform:translateX(-100%);">$5.1M</div>
<div class="a" style="left:1066.8px;top:178px;width:195.4px;height:411.4px;background:#fff;border:1px solid #d2dde8"></div>
<div class="t" style="left:1164.5px;top:188.1px;font-size:10.45px;font-weight:700;color:#111;transform:translateX(-50%);">Total Revenue by Product</div>
<div class="a" style="left:1134px;top:233.2px;width:98.8px;height:45.5px;background:#6fa8dc;border-radius:2px"></div>
<div class="t" style="left:1128.4px;top:251.5px;font-size:8.5px;font-weight:700;color:#222;transform:translateX(-100%);">Product A</div>
<div class="t" style="left:1229.1px;top:251.36px;font-size:8.8px;font-weight:700;color:#14264a;transform:translateX(-100%);">$5.3M</div>
<div class="a" style="left:1134px;top:304.23px;width:110.3px;height:45.5px;background:#6fa8dc;border-radius:2px"></div>
<div class="t" style="left:1128.4px;top:322.53px;font-size:8.5px;font-weight:700;color:#222;transform:translateX(-100%);">Product B</div>
<div class="t" style="left:1240.6px;top:322.39px;font-size:8.8px;font-weight:700;color:#14264a;transform:translateX(-100%);">$5.9M</div>
<div class="a" style="left:1134px;top:375.26px;width:97.3px;height:45.5px;background:#6fa8dc;border-radius:2px"></div>
<div class="t" style="left:1128.4px;top:393.56px;font-size:8.5px;font-weight:700;color:#222;transform:translateX(-100%);">Product C</div>
<div class="t" style="left:1227.6px;top:393.42px;font-size:8.8px;font-weight:700;color:#14264a;transform:translateX(-100%);">$5.2M</div>
<div class="a" style="left:1134px;top:446.29px;width:86.8px;height:45.5px;background:#6fa8dc;border-radius:2px"></div>
<div class="t" style="left:1128.4px;top:464.59px;font-size:8.5px;font-weight:700;color:#222;transform:translateX(-100%);">Service X</div>
<div class="t" style="left:1217.1px;top:464.45px;font-size:8.8px;font-weight:700;color:#14264a;transform:translateX(-100%);">$4.7M</div>
<div class="a" style="left:1134px;top:517.32px;width:95.5px;height:45.5px;background:#6fa8dc;border-radius:2px"></div>
<div class="t" style="left:1128.4px;top:535.62px;font-size:8.5px;font-weight:700;color:#222;transform:translateX(-100%);">Service Y</div>
<div class="t" style="left:1225.8px;top:535.48px;font-size:8.8px;font-weight:700;color:#14264a;transform:translateX(-100%);">$5.1M</div>
<div class="a" style="left:237.4px;top:257.5px;width:225.9px;height:331.7px;background:#fff;border:1px solid #d2dde8"></div>
<div class="t" style="left:350.8px;top:271.9px;font-size:10.45px;font-weight:700;color:#111;transform:translateX(-50%);">Total Revenue by Sales Channel</div>
<svg width="1280" height="606" style="left:0;top:0"><path d="M350.00,334.40 A78.3,78.3 0 0 1 428.23,416.00 L388.97,414.34 A39,39 0 0 0 350.00,373.70 Z" fill="#a4c2f4"/><path d="M428.23,416.00 A78.3,78.3 0 0 1 354.71,490.86 L352.35,451.63 A39,39 0 0 0 388.97,414.34 Z" fill="#3c78d8"/><path d="M354.71,490.86 A78.3,78.3 0 0 1 271.74,410.34 L311.02,411.53 A39,39 0 0 0 352.35,451.63 Z" fill="#a4c2f4"/><path d="M271.74,410.34 A78.3,78.3 0 0 1 350.00,334.40 L350.00,373.70 A39,39 0 0 0 311.02,411.53 Z" fill="#4285f4"/></svg>
<div class="t" style="left:393.1px;top:368.7px;font-size:8.6px;font-weight:700;color:#fff;transform:translateX(-50%);">$6.7M</div>
<div class="t" style="left:392.6px;top:448.9px;font-size:8.6px;font-weight:700;color:#14264a;transform:translateX(-50%);">$6.1M</div>
<div class="t" style="left:309.6px;top:448.7px;font-size:12.5px;font-weight:400;color:#1b2642;transform:translateX(-50%);">$6.9M</div>
<div class="t" style="left:309.6px;top:365px;font-size:12.5px;font-weight:400;color:#1b2642;transform:translateX(-50%);">$6.4M</div>
<svg width="1280" height="606" style="left:0;top:0"><circle cx="277.8" cy="537.5" r="5.2" fill="#a4c2f4"/><circle cx="333.6" cy="537.5" r="5.2" fill="#3c78d8"/><circle cx="391.8" cy="537.5" r="5.2" fill="#a4c2f4"/><circle cx="325.2" cy="551.5" r="5.2" fill="#4285f4"/></svg>
<div class="t" style="left:290.6px;top:533.35px;font-size:8.5px;font-weight:700;color:#222;">Direct</div>
<div class="t" style="left:345.8px;top:533.35px;font-size:8.5px;font-weight:700;color:#222;">Online</div>
<div class="t" style="left:404.4px;top:533.35px;font-size:8.5px;font-weight:700;color:#222;">Retail</div>
<div class="t" style="left:337.6px;top:547.35px;font-size:8.5px;font-weight:700;color:#222;">Wholesale</div>
<div class="a" style="left:468.2px;top:257.6px;width:365.4px;height:173.2px;background:#fff;border:1px solid #d2dde8"></div>
<div class="t" style="left:653.4px;top:269.8px;font-size:10.45px;font-weight:700;color:#111;transform:translateX(-50%);">Target by Status</div>
<div class="t" style="left:523px;top:284.6px;font-size:8.6px;font-weight:700;color:#222;transform:translateX(-100%);">$15.0M</div>
<div class="t" style="left:523px;top:324.1px;font-size:8.6px;font-weight:700;color:#222;transform:translateX(-100%);">$10.0M</div>
<div class="t" style="left:523px;top:362.7px;font-size:8.6px;font-weight:700;color:#222;transform:translateX(-100%);">$5.0M</div>
<div class="t" style="left:523px;top:401.9px;font-size:8.6px;font-weight:700;color:#222;transform:translateX(-100%);">$0</div>
<div class="a" style="left:571.4px;top:312px;width:80.8px;height:93.6px;background:#6d9eeb;border-radius:1.5px 1.5px 0 0"></div>
<div class="t" style="left:611.8px;top:315.2px;font-size:8.6px;font-weight:700;color:#16284a;transform:translateX(-50%);">$12.1M</div>
<div class="t" style="left:611.8px;top:409.8px;font-size:8.6px;font-weight:700;color:#222;transform:translateX(-50%);">Met</div>
<div class="a" style="left:696.9px;top:296.3px;width:81px;height:109.3px;background:#6d9eeb;border-radius:1.5px 1.5px 0 0"></div>
<div class="t" style="left:737.4px;top:299.5px;font-size:8.6px;font-weight:700;color:#16284a;transform:translateX(-50%);">$14.0M</div>
<div class="t" style="left:737.4px;top:409.8px;font-size:8.6px;font-weight:700;color:#222;transform:translateX(-50%);">Missed</div>
<div class="a" style="left:838px;top:257.6px;width:224.6px;height:171.3px;background:#fff;border:1px solid #d2dde8"></div>
<div class="t" style="left:951.6px;top:266px;font-size:10.45px;font-weight:700;color:#111;transform:translateX(-50%);">Count by Status</div>
<svg width="1280" height="606" style="left:0;top:0"><path d="M951.7,284.7 A58.7,58.7 0 0 1 951.7,402.09999999999997 Z" fill="#1c4587"/><path d="M951.7,402.09999999999997 A58.7,58.7 0 0 1 951.7,284.7 Z" fill="#a4c2f4"/><circle cx="910.2" cy="413" r="5" fill="#1c4587"/><circle cx="956.8" cy="413" r="5" fill="#a4c2f4"/></svg>
<div class="t" style="left:910.2px;top:336.55px;font-size:12.4px;font-weight:700;color:#fff;transform:translateX(-50%);">250</div>
<div class="t" style="left:992.5px;top:336.55px;font-size:12.4px;font-weight:700;color:#fff;transform:translateX(-50%);">250</div>
<div class="t" style="left:922.6px;top:408.8px;font-size:8.6px;font-weight:700;color:#222;">Met</div>
<div class="t" style="left:968.7px;top:408.8px;font-size:8.6px;font-weight:700;color:#222;">Missed</div>
<div class="a" style="left:468.3px;top:433.3px;width:593.8px;height:156.3px;background:#fff;border:1px solid #d2dde8"></div>
<div class="t" style="left:763.4px;top:440.3px;font-size:10.45px;font-weight:700;color:#111;transform:translateX(-50%);">Variance by Month</div>
<div class="t" style="left:526.2px;top:445.1px;font-size:8.6px;font-weight:700;color:#222;transform:translateX(-100%);">$50.0K</div>
<div class="t" style="left:526.2px;top:473.8px;font-size:8.6px;font-weight:700;color:#222;transform:translateX(-100%);">$25.0K</div>
<div class="t" style="left:526.2px;top:503.1px;font-size:8.6px;font-weight:700;color:#222;transform:translateX(-100%);">$0</div>
<div class="t" style="left:526.2px;top:531.8px;font-size:8.6px;font-weight:700;color:#222;transform:translateX(-100%);">-$25000</div>
<div class="t" style="left:526.2px;top:560.9px;font-size:8.6px;font-weight:700;color:#222;transform:translateX(-100%);">-$50000</div>
<svg width="1280" height="606" style="left:0;top:0"><defs><clipPath id="pc"><rect x="530.9" y="430" width="505.4" height="160"/></clipPath></defs><g clip-path="url(#pc)"><path d="M530.90,485.36 C538.56,485.63 561.53,476.76 576.85,486.98 C592.17,497.21 607.48,540.85 622.80,546.72 C638.12,552.58 653.43,532.49 668.75,522.17 C684.07,511.85 699.38,485.96 714.70,484.78 C730.02,483.61 745.33,507.44 760.65,515.13 C775.97,522.82 791.28,523.33 806.60,530.92 C821.92,538.51 837.23,565.10 852.55,560.69 C867.87,556.28 883.18,519.59 898.50,504.47 C913.82,489.35 929.13,470.64 944.45,469.96 C959.77,469.28 975.08,493.09 990.40,500.42 C1005.72,507.74 1028.69,511.67 1036.35,513.93 L1036.35,506.9 L530.90,506.9 Z" fill="#c5d9f1"/><rect x="530.60" y="471.86" width="0.6" height="10" fill="#e4e4e4"/><rect x="576.55" y="473.48" width="0.6" height="10" fill="#e4e4e4"/><rect x="622.50" y="533.22" width="0.6" height="10" fill="#e4e4e4"/><rect x="668.45" y="508.67" width="0.6" height="10" fill="#e4e4e4"/><rect x="714.40" y="471.28" width="0.6" height="10" fill="#e4e4e4"/><rect x="760.35" y="501.63" width="0.6" height="10" fill="#e4e4e4"/><rect x="806.30" y="517.42" width="0.6" height="10" fill="#e4e4e4"/><rect x="852.25" y="547.19" width="0.6" height="10" fill="#e4e4e4"/><rect x="898.20" y="490.97" width="0.6" height="10" fill="#e4e4e4"/><rect x="990.10" y="486.92" width="0.6" height="10" fill="#e4e4e4"/><rect x="1036.05" y="500.43" width="0.6" height="10" fill="#e4e4e4"/><path d="M530.90,485.36 C538.56,485.63 561.53,476.76 576.85,486.98 C592.17,497.21 607.48,540.85 622.80,546.72 C638.12,552.58 653.43,532.49 668.75,522.17 C684.07,511.85 699.38,485.96 714.70,484.78 C730.02,483.61 745.33,507.44 760.65,515.13 C775.97,522.82 791.28,523.33 806.60,530.92 C821.92,538.51 837.23,565.10 852.55,560.69 C867.87,556.28 883.18,519.59 898.50,504.47 C913.82,489.35 929.13,470.64 944.45,469.96 C959.77,469.28 975.08,493.09 990.40,500.42 C1005.72,507.74 1028.69,511.67 1036.35,513.93" fill="none" stroke="#3d85c6" stroke-width="2"/><circle cx="530.90" cy="485.36" r="3.6" fill="#3d85c6"/><circle cx="576.85" cy="486.98" r="3.6" fill="#3d85c6"/><circle cx="622.80" cy="546.72" r="3.6" fill="#3d85c6"/><circle cx="668.75" cy="522.17" r="3.6" fill="#3d85c6"/><circle cx="714.70" cy="484.78" r="3.6" fill="#3d85c6"/><circle cx="760.65" cy="515.13" r="3.6" fill="#3d85c6"/><circle cx="806.60" cy="530.92" r="3.6" fill="#3d85c6"/><circle cx="852.55" cy="560.69" r="3.6" fill="#3d85c6"/><circle cx="898.50" cy="504.47" r="3.6" fill="#3d85c6"/><circle cx="944.45" cy="469.96" r="3.6" fill="#3d85c6"/><circle cx="990.40" cy="500.42" r="3.6" fill="#3d85c6"/><circle cx="1036.35" cy="513.93" r="3.6" fill="#3d85c6"/></g></svg>
<div class="t" style="left:530.9px;top:462.76px;font-size:8.6px;font-weight:700;color:#222;transform:translateX(-50%);text-shadow:0 0 2px #fff,0 0 2px #fff,0 0 1px #fff;">$18.6K</div>
<div class="t" style="left:530.9px;top:569.8px;font-size:8.6px;font-weight:700;color:#222;transform:translateX(-50%);">Apr</div>
<div class="t" style="left:576.85px;top:464.39px;font-size:8.6px;font-weight:700;color:#222;transform:translateX(-50%);text-shadow:0 0 2px #fff,0 0 2px #fff,0 0 1px #fff;">$17.2K</div>
<div class="t" style="left:576.85px;top:569.8px;font-size:8.6px;font-weight:700;color:#222;transform:translateX(-50%);">Aug</div>
<div class="t" style="left:622.8px;top:524.12px;font-size:8.6px;font-weight:700;color:#222;transform:translateX(-50%);text-shadow:0 0 2px #fff,0 0 2px #fff,0 0 1px #fff;">-$34384</div>
<div class="t" style="left:622.8px;top:569.8px;font-size:8.6px;font-weight:700;color:#222;transform:translateX(-50%);">Dec</div>
<div class="t" style="left:668.75px;top:499.57px;font-size:8.6px;font-weight:700;color:#222;transform:translateX(-50%);text-shadow:0 0 2px #fff,0 0 2px #fff,0 0 1px #fff;">-$13188</div>
<div class="t" style="left:668.75px;top:569.8px;font-size:8.6px;font-weight:700;color:#222;transform:translateX(-50%);">Feb</div>
<div class="t" style="left:714.7px;top:462.19px;font-size:8.6px;font-weight:700;color:#222;transform:translateX(-50%);text-shadow:0 0 2px #fff,0 0 2px #fff,0 0 1px #fff;">$19.1K</div>
<div class="t" style="left:714.7px;top:569.8px;font-size:8.6px;font-weight:700;color:#222;transform:translateX(-50%);">Jan</div>
<div class="t" style="left:760.65px;top:492.54px;font-size:8.6px;font-weight:700;color:#222;transform:translateX(-50%);text-shadow:0 0 2px #fff,0 0 2px #fff,0 0 1px #fff;">-$7111</div>
<div class="t" style="left:760.65px;top:569.8px;font-size:8.6px;font-weight:700;color:#222;transform:translateX(-50%);">Jul</div>
<div class="t" style="left:806.6px;top:508.32px;font-size:8.6px;font-weight:700;color:#222;transform:translateX(-50%);text-shadow:0 0 2px #fff,0 0 2px #fff,0 0 1px #fff;">-$20744</div>
<div class="t" style="left:806.6px;top:569.8px;font-size:8.6px;font-weight:700;color:#222;transform:translateX(-50%);">Jun</div>
<div class="t" style="left:852.55px;top:538.09px;font-size:8.6px;font-weight:700;color:#222;transform:translateX(-50%);text-shadow:0 0 2px #fff,0 0 2px #fff,0 0 1px #fff;">-$46451</div>
<div class="t" style="left:852.55px;top:569.8px;font-size:8.6px;font-weight:700;color:#222;transform:translateX(-50%);">Mar</div>
<div class="t" style="left:898.5px;top:481.87px;font-size:8.6px;font-weight:700;color:#222;transform:translateX(-50%);text-shadow:0 0 2px #fff,0 0 2px #fff,0 0 1px #fff;">$2.1K</div>
<div class="t" style="left:898.5px;top:569.8px;font-size:8.6px;font-weight:700;color:#222;transform:translateX(-50%);">May</div>
<div class="t" style="left:944.45px;top:569.8px;font-size:8.6px;font-weight:700;color:#222;transform:translateX(-50%);">Nov</div>
<div class="t" style="left:990.4px;top:477.82px;font-size:8.6px;font-weight:700;color:#222;transform:translateX(-50%);text-shadow:0 0 2px #fff,0 0 2px #fff,0 0 1px #fff;">$5.6K</div>
<div class="t" style="left:990.4px;top:569.8px;font-size:8.6px;font-weight:700;color:#222;transform:translateX(-50%);">Oct</div>
<div class="t" style="left:1036.35px;top:491.33px;font-size:8.6px;font-weight:700;color:#222;transform:translateX(-50%);text-shadow:0 0 2px #fff,0 0 2px #fff,0 0 1px #fff;">-$6068</div>
<div class="t" style="left:1036.35px;top:569.8px;font-size:8.6px;font-weight:700;color:#222;transform:translateX(-50%);">Sep</div>
</body></html>
